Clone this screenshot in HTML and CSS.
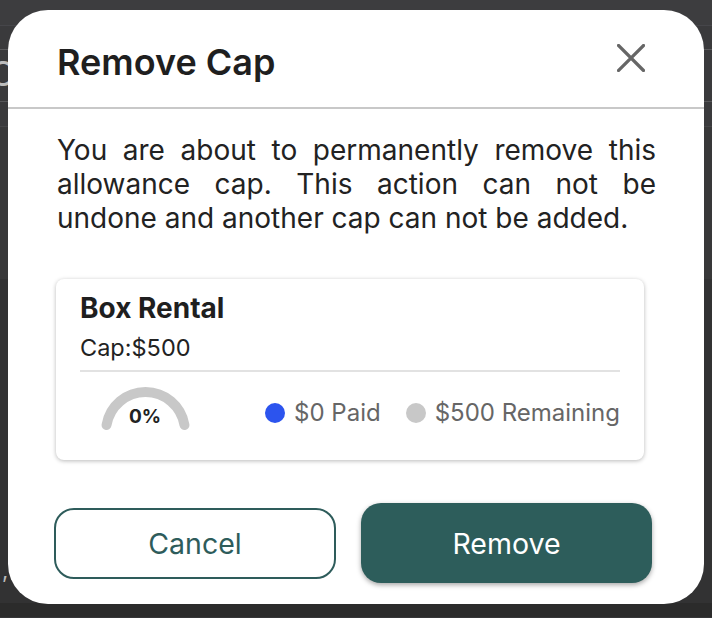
FILE: index.html
```html
<!DOCTYPE html>
<html>
<head>
<meta charset="utf-8">
<link rel="stylesheet" href="styles.css">
</head>
<body>
<div class="backdrop">
  <div class="bd-band bd-top"></div>
  <div class="bd-band bd-b1"></div>
  <div class="bd-band bd-b2"><span class="bd-glyph">C</span></div>
  <div class="bd-band bd-b3"></div>
  <div class="bd-band bd-b4"></div>
  <div class="bd-band bd-b5"><span class="bd-comma">,</span></div>
  <div class="bd-band bd-bottom"></div>
</div>

<div class="dialog">
  <div class="dialog-header">
    <h1 class="dialog-title">Remove Cap</h1>
    <button class="close-btn" aria-label="Close">
      <svg width="28" height="28" viewBox="0 0 28 28"><path d="M1.5 1.5 L26.5 26.5 M26.5 1.5 L1.5 26.5" stroke="#666" stroke-width="3.2" stroke-linecap="square" fill="none"/></svg>
    </button>
  </div>
  <div class="dialog-body">
    <p class="message">You are about to permanently remove this allowance cap. This action can not be undone and another cap can not be added.</p>
    <div class="card">
      <div class="card-title">Box Rental</div>
      <div class="card-cap">Cap:$500</div>
      <div class="card-divider"></div>
      <div class="card-row">
        <div class="gauge">
          <svg width="100" height="56" viewBox="0 0 100 56">
            <path d="M11.54 44.98 A39.5 39.5 0 0 1 89.46 44.98" stroke="#c8c8c8" stroke-width="10" stroke-linecap="round" fill="none"/>
          </svg>
          <span class="gauge-label">0%</span>
        </div>
        <div class="legend">
          <span class="legend-item"><span class="dot dot-blue"></span>$0 Paid</span>
          <span class="legend-item"><span class="dot dot-gray"></span>$500 Remaining</span>
        </div>
      </div>
    </div>
  </div>
  <div class="actions">
    <button class="btn btn-cancel">Cancel</button>
    <button class="btn btn-remove">Remove</button>
  </div>
</div>
</body>
</html>
```
FILE: styles.css
```css
* { box-sizing: border-box; }
html, body { margin: 0; padding: 0; }
body {
  width: 712px;
  height: 618px;
  overflow: hidden;
  background: #363638;
  position: relative;
  font-family: Inter, "Liberation Sans", sans-serif;
}
.backdrop { display: flex; flex-direction: column; }
.bd-band { position: relative; overflow: hidden; }
.bd-top { height: 26px; background: #3d3d3f; border-bottom: 1px solid #46464a; }
.bd-b1 { height: 24px; background: #3a3a3c; border-bottom: 1px solid #5a5a5c; }
.bd-b2 { height: 52px; background: #3a3a3c; border-bottom: 1px solid #58585a; }
.bd-b3 { height: 25px; background: #3a3a3c; border-bottom: 1px solid #454547; }
.bd-b4 { height: 152px; background: #383839; }
.bd-b5 { height: 324px; background: #323233; }
.bd-bottom { height: 14px; background: #2b2b2b; }
.bd-glyph {
  position: absolute; left: -10px; top: 4px;
  font-size: 34px; color: #bdbdbd; line-height: 40px;
}
.bd-comma {
  position: absolute; left: 2px; top: 278px;
  font-size: 22px; color: #bdbdbd;
}

.dialog {
  position: absolute;
  left: 8px; top: 10px;
  width: 696px; height: 594px;
  background: #fff;
  border-radius: 40px;
  display: flex;
  flex-direction: column;
}
.dialog-header {
  height: 97px;
  border-bottom: 2px solid #c8c8c8;
  display: flex;
  align-items: center;
  justify-content: space-between;
  padding: 0 59px 0 49px;
  box-sizing: content-box;
}
.dialog-title {
  margin: 0;
  font-family: Inter, sans-serif;
  font-weight: 600;
  font-size: 36px;
  line-height: 42px;
  color: #1f1f1f;
  padding-top: 6px;
}
.close-btn {
  border: 0; background: none; padding: 0; margin: 0;
  width: 28px; height: 28px;
  display: flex;
  margin-top: -2px;
}
.dialog-body {
  padding: 24px 48px 0 49px;
}
.message {
  margin: 0;
  font-family: Inter, sans-serif;
  font-size: 28px;
  line-height: 34px;
  color: #222;
  text-align: justify;
}
.card {
  margin-top: 44px;
  width: 588px;
  margin-left: -1px;
  height: 181px;
  border-radius: 8px;
  background: #fff;
  box-shadow: 0 1px 4px rgba(0,0,0,0.28);
  padding: 14px 24px 0;
  font-family: Inter, sans-serif;
}
.card-title {
  font-weight: 700;
  font-size: 28px;
  line-height: 30px;
  color: #1f1f1f;
}
.card-cap {
  margin-top: 10px;
  font-size: 23.5px;
  line-height: 30px;
  color: #222;
}
.card-divider {
  margin-top: 7px;
  height: 2px;
  background: #e2e2e2;
}
.card-row {
  display: flex;
  justify-content: space-between;
  align-items: flex-start;
  margin-top: 8px;
}
.gauge {
  position: relative;
  margin-left: 15px;
  width: 100px;
  height: 56px;
}
.gauge svg { display: block; }
.gauge-label {
  position: absolute;
  left: 0; right: 0;
  top: 25px;
  text-align: center;
  font-weight: 700;
  font-size: 19px;
  line-height: 24px;
  color: #222;
}
.legend {
  display: flex;
  gap: 25px;
  margin-top: 19px;
  font-size: 24px;
  line-height: 28px;
  color: #666;
}
.legend-item { display: flex; align-items: center; }
.dot {
  width: 20px; height: 20px; border-radius: 50%;
  margin-right: 9px;
}
.dot-blue { background: #2c54ee; }
.dot-gray { background: #c8c8c8; }

.actions {
  display: flex;
  align-items: center;
  gap: 25px;
  padding: 0 52px 0 46px;
  margin-top: 43px;
}
.btn {
  font-family: Inter, sans-serif;
  font-size: 28.5px;
  border-radius: 20px;
  cursor: pointer;
}
.btn-cancel {
  width: 282px;
  height: 71px;
  background: #fff;
  border: 2px solid #2e5c5b;
  color: #2e5c5b;
}
.btn-remove {
  width: 291px;
  height: 80px;
  background: #2d5d5b;
  border: 0;
  color: #fff;
  box-shadow: 0 2px 5px rgba(0,0,0,0.35);
}
```
